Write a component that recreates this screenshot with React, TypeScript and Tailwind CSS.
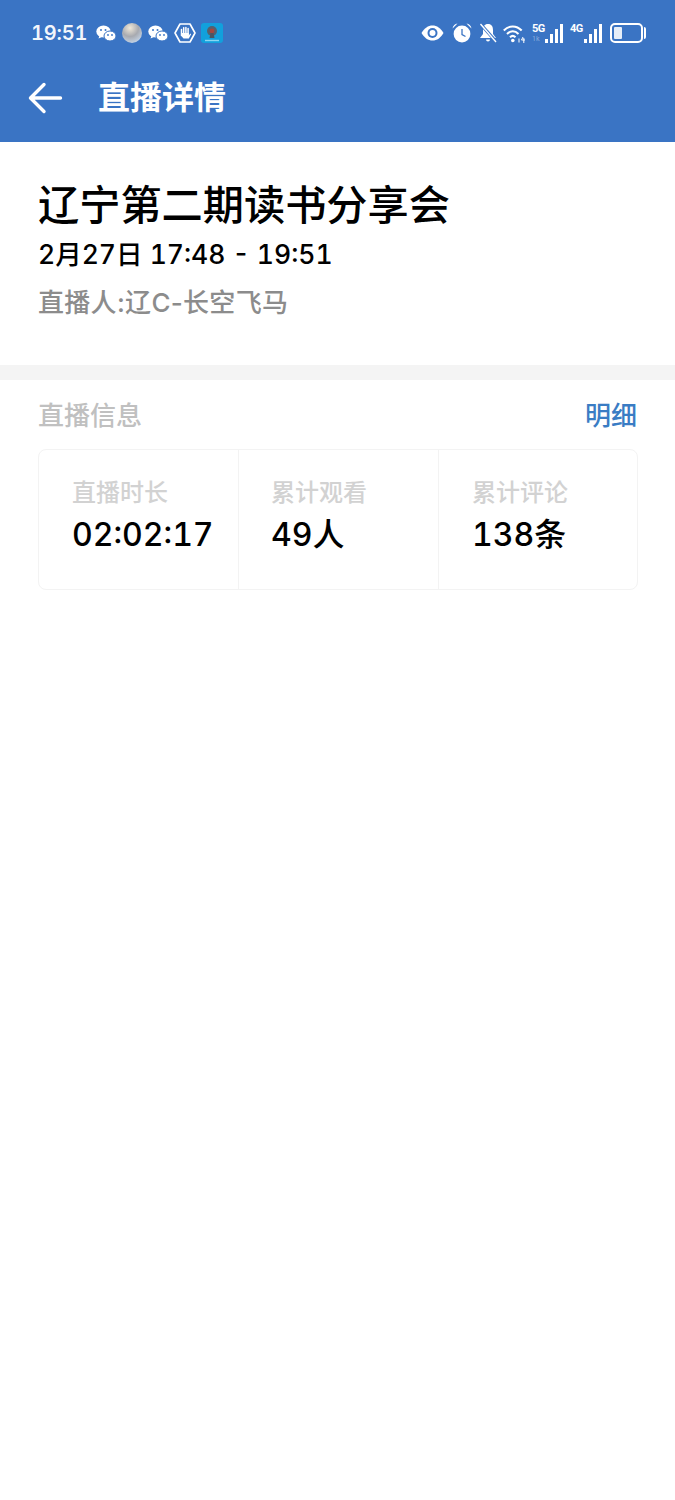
const FONT = "font-['Inter','Noto_Sans_CJK_SC',sans-serif]";

function BackArrow() {
  return (
    <svg width="36" height="32" viewBox="0 0 36 32" fill="none" className="shrink-0">
      <path d="M33.500 16H4M17 2.500L3.500 16 17 29.500" stroke="white" strokeWidth="3.400" strokeLinecap="round" strokeLinejoin="round" />
    </svg>
  );
}

function WeChatIcon() {
  return (
    <svg width="20" height="17" viewBox="0 0 20 17" fill="white" className="shrink-0">
      <ellipse cx="7.500" cy="6.500" rx="7.200" ry="6" />
      <path d="M3.500 10.500l-1 3 3.500-1.600z" />
      <ellipse cx="14" cy="11" rx="6" ry="5" stroke="#3a74c4" strokeWidth="1" />
      <circle cx="5" cy="5" r="1" fill="#3a74c4" />
      <circle cx="9.500" cy="5" r="1" fill="#3a74c4" />
      <circle cx="12" cy="10" r="0.900" fill="#3a74c4" />
      <circle cx="16" cy="10" r="0.900" fill="#3a74c4" />
    </svg>
  );
}

function SphereIcon() {
  return (
    <svg width="20" height="20" viewBox="0 0 20 20" className="shrink-0">
      <defs>
        <radialGradient id="sphere" cx="0.400" cy="0.250" r="0.850">
          <stop offset="0" stopColor="#f0e8d8" />
          <stop offset="0.500" stopColor="#a8aab0" />
          <stop offset="1" stopColor="#c9dcf2" />
        </radialGradient>
      </defs>
      <circle cx="10" cy="10" r="10" fill="url(#sphere)" />
    </svg>
  );
}

function HandIcon() {
  return (
    <svg width="22" height="20" viewBox="0 0 22 20" fill="none" className="shrink-0">
      <path d="M6 1h10l5 9-5 9H6l-5-9z" stroke="white" strokeWidth="1.600" strokeLinejoin="round" />
      <path d="M7.500 6.500v6M9.700 4.800v6M11.900 4.500v6M14.100 5.500v6" stroke="white" strokeWidth="1.500" strokeLinecap="round" />
      <path d="M7 10h7.800v2.500l1.500-2 .8.700-2.300 4.300H9.500L7 12.500z" fill="white" />
    </svg>
  );
}

function AppIcon() {
  return (
    <svg width="22" height="20" viewBox="0 0 22 20" className="shrink-0">
      <rect width="22" height="20" rx="3" fill="#12a0dc" />
      <circle cx="11" cy="8" r="5" fill="#55616f" />
      <circle cx="11" cy="8" r="2.400" fill="#a5473f" />
      <path d="M9.500 10h3l1 5h-5z" fill="#4b5563" />
      <path d="M4 17.500h14" stroke="#8ad6f2" strokeWidth="1.400" />
    </svg>
  );
}

function EyeIcon() {
  return (
    <svg width="23" height="16" viewBox="0 0 23 16" className="shrink-0">
      <path d="M0.500 8C3.500 3 7 0.500 11.500 0.500S19.500 3 22.500 8C19.500 13 16 15.500 11.500 15.500S3.500 13 0.500 8z" fill="white" />
      <circle cx="11.500" cy="8" r="5" fill="#3a74c4" />
      <circle cx="11.500" cy="8" r="3" fill="white" />
    </svg>
  );
}

function AlarmIcon() {
  return (
    <svg width="20" height="20" viewBox="0 0 20 20" className="ml-[2px] shrink-0">
      <circle cx="10" cy="11" r="8.400" fill="white" />
      <path d="M0.500 5.500C1 2.800 3 0.500 5.500 0.500zM19.500 5.500C19 2.800 17 0.500 14.500 0.500z" fill="white" />
      <path d="M10 6v5.500l3.500 2" fill="none" stroke="#3a74c4" strokeWidth="1.300" />
    </svg>
  );
}

function MutedBellIcon() {
  return (
    <svg width="18" height="20" viewBox="0 0 18 20" className="ml-[1px] shrink-0">
      <path d="M9 1c3.500 0 5 2.500 5 6v4l3 4H1l3-4V7c0-3.500 1.500-6 5-6z" fill="white" />
      <path d="M7 16.500h4a2 2 0 01-4 0z" fill="white" />
      <path d="M1 0.500l16 18" stroke="#3a74c4" strokeWidth="3.200" />
      <path d="M1.500 1l15.500 18" stroke="white" strokeWidth="1.400" />
    </svg>
  );
}

function WifiIcon() {
  return (
    <svg width="24" height="19" viewBox="0 0 24 19" fill="none" className="shrink-0">
      <path d="M0.800 6.500C6 1 13.500 1 18.700 6.500" stroke="white" strokeWidth="2" />
      <path d="M4 10C7.500 6.400 12 6.400 15.500 10" stroke="white" strokeWidth="2" />
      <path d="M7 13.200c1.700-1.700 3.800-1.700 5.500 0" stroke="white" strokeWidth="2" />
      <circle cx="9.800" cy="16.500" r="1.800" fill="white" />
      <path d="M16 14.500v4M20 13l-1.500 3h3.500M20.800 14v5" stroke="white" strokeWidth="1" />
    </svg>
  );
}

function SignalIcon({ label, sub, className }: { label: string; sub?: string; className: string }) {
  return (
    <div className={`relative flex h-[19px] shrink-0 items-end justify-end gap-[2px] ${className}`}>
      <span className="absolute left-0 top-0 font-['Roboto'] text-[11px] font-bold leading-[9px] tracking-[-0.5px] text-white">{label}</span>
      {sub && <span className="absolute bottom-0 left-0 font-['Roboto'] text-[7px] leading-[7px] text-white/40">{sub}</span>}
      <div className="h-[4px] w-[3px] bg-white" />
      <div className="h-[9px] w-[3px] bg-white" />
      <div className="h-[14px] w-[3px] bg-white" />
      <div className="h-[19px] w-[3px] bg-white" />
    </div>
  );
}

function BatteryIcon() {
  return (
    <div className="ml-[2px] flex shrink-0 items-center gap-[1px]">
      <div className="flex h-[20px] w-[33px] items-center rounded-[5px] border-2 border-white p-[2px]">
        <div className="h-full w-[8px] rounded-[1px] bg-[#e6eef8]" />
      </div>
      <div className="h-[12px] w-[2px] rounded-r-sm bg-white" />
    </div>
  );
}

function StatusBar() {
  return (
    <div className="flex h-[66px] items-center justify-between pl-[31px] pr-[29px]">
      <div className="flex items-center">
        <span className="w-[65px] text-[20px] font-semibold tracking-[-0.2px] tabular-nums text-white/95">19:51</span>
        <div className="flex items-center gap-[6px]">
          <WeChatIcon />
          <SphereIcon />
          <WeChatIcon />
          <HandIcon />
          <div className="-ml-[1px]">
            <AppIcon />
          </div>
        </div>
      </div>
      <div className="flex items-center gap-[6px]">
        <EyeIcon />
        <AlarmIcon />
        <MutedBellIcon />
        <WifiIcon />
        <SignalIcon label="5G" sub="1k" className="-ml-[1px] w-[31px]" />
        <SignalIcon label="4G" className="ml-[1px] w-[32px]" />
        <BatteryIcon />
      </div>
    </div>
  );
}

function Metric({ label, value, className }: { label: string; value: string; className: string }) {
  return (
    <div className={`pt-[28px] ${className}`}>
      <div className="text-[24px] font-medium leading-[30px] text-[#d2d2d2]">{label}</div>
      <div className="mt-[7px] text-[32px] font-medium leading-[40px] tabular-nums text-black">{value}</div>
    </div>
  );
}

export default function App() {
  return (
    <div className={`min-h-[1500px] bg-white ${FONT}`}>
      <div className="bg-[#3a74c4]">
        <StatusBar />
        <div className="flex h-[76px] items-center pb-[13px] pl-[27px]">
          <BackArrow />
          <h1 className="ml-[35px] text-[32px] font-bold leading-[40px] text-white">直播详情</h1>
        </div>
      </div>

      <div className="h-[223px] px-[38px] pt-[38px]">
        <div className="text-[41.200px] font-medium leading-[50px] text-black">辽宁第二期读书分享会</div>
        <div className="mt-[6px] text-[26.500px] font-medium leading-[36px] tabular-nums text-black">2月27日 17:48 - 19:51</div>
        <div className="mt-[14px] text-[26px] font-medium leading-[34px] tracking-[0.3px] text-[#8c8c8c]">直播人:辽C-长空飞马</div>
      </div>

      <div className="h-[15px] bg-[#f4f4f4]" />

      <div className="pl-[38px] pr-[37px]">
        <div className="flex h-[69px] items-center justify-between pt-[2px]">
          <span className="text-[26px] font-medium text-[#c0c0c0]">直播信息</span>
          <span className="mr-[1px] text-[26px] font-medium text-[#3a7cc4]">明细</span>
        </div>
        <div className="flex h-[141px] rounded-[8px] border border-[#f3f3f3]">
          <Metric label="直播时长" value="02:02:17" className="w-[200px] border-r border-[#f3f3f3] pl-[33px]" />
          <Metric label="累计观看" value="49人" className="w-[200px] border-r border-[#f3f3f3] pl-[32px]" />
          <Metric label="累计评论" value="138条" className="flex-1 pl-[33px]" />
        </div>
      </div>
    </div>
  );
}
